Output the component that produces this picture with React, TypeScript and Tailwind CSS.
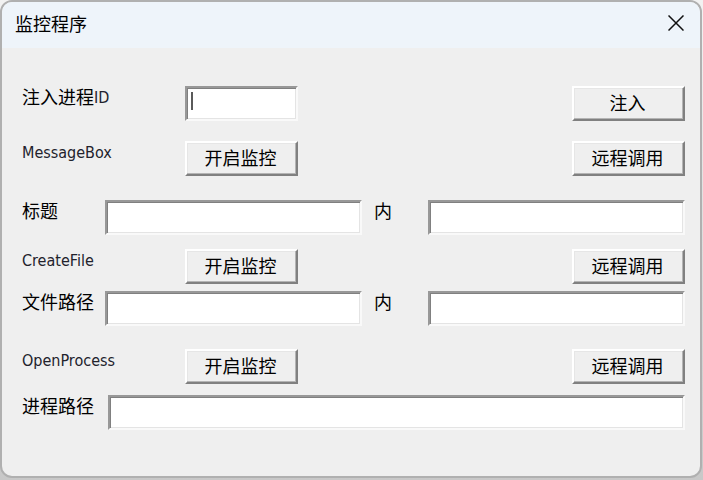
import type { ReactNode } from "react";

function ClassicButton({ children }: { children: ReactNode }) {
  return (
    <button
      type="button"
      className="h-[35px] w-[113px] shrink-0 border-2 border-t-white border-r-[#808080] border-b-[#808080] border-l-white bg-[#efefef] pr-0.5 pb-[3px] text-lg leading-none text-black shadow-[inset_-1px_-1px_0_#b4b4b4,inset_1px_1px_0_#e6e6e6]"
    >
      {children}
    </button>
  );
}

function Field({ id, grow = true }: { id: string; grow?: boolean }) {
  return (
    <input
      id={id}
      type="text"
      className={
        "h-[35px] min-w-0 border-2 border-t-[#989898] border-r-[#f9f9f9] border-b-[#f9f9f9] border-l-[#989898] bg-white px-1 text-lg text-black shadow-[inset_1px_1px_0_#808080,inset_-1px_-1px_0_#e4e4e4] outline-none " +
        (grow ? "flex-1" : "w-full caret-transparent")
      }
    />
  );
}

const cjkLabel = "shrink-0 text-lg leading-5 text-black";
const latin = "font-['DejaVu_Sans_Condensed','DejaVu_Sans',sans-serif] text-base leading-6 text-[#22222c]";

function ActionRow({ name }: { name: string }) {
  return (
    <div className="flex items-start">
      <span className={"w-[163px] shrink-0 " + latin}>{name}</span>
      <ClassicButton>开启监控</ClassicButton>
      <div className="flex-1" />
      <ClassicButton>远程调用</ClassicButton>
    </div>
  );
}

function PairRow({ id, label }: { id: string; label: string }) {
  return (
    <div className="flex items-start">
      <label htmlFor={id} className={"w-[83px] " + cjkLabel}>
        {label}
      </label>
      <Field id={id} />
      <label htmlFor={id + "-content"} className={"w-[66px] pl-3 " + cjkLabel}>
        内
      </label>
      <Field id={id + "-content"} />
    </div>
  );
}

export default function App() {
  return (
    <div className="flex min-h-screen bg-linear-to-b from-[#f2f2f2] to-[#c8c8c8] pr-px pb-[2px] font-['Noto_Sans_CJK_SC',sans-serif]">
      <div className="flex flex-1 flex-col overflow-hidden rounded-xl border-2 border-[#b0b0b0] bg-[#efefef]">
        <header className="flex h-[46px] items-center justify-between bg-[#eef4fa] pr-[14px] pb-1 pl-[13px]">
          <h1 className="text-lg leading-5 text-black">监控程序</h1>
          <button type="button" aria-label="关闭" className="flex size-5 items-center justify-center">
            <svg viewBox="0 0 16 16" className="size-4" fill="none" stroke="#111" strokeWidth="1.5">
              <path d="M.5.5l15 15M15.5.5l-15 15" />
            </svg>
          </button>
        </header>
        <main className="flex flex-col pt-[38px] pr-[15px] pb-11 pl-5">
          <div className="flex items-start">
            <label htmlFor="pid" className={"flex w-[163px] " + cjkLabel}>
              注入进程<span className={latin}>ID</span>
            </label>
            <div className="relative flex w-[113px] shrink-0">
              <Field id="pid" grow={false} />
              <span className="absolute top-1.5 left-1.5 h-[18px] w-0.5 bg-[#5a5a5a]" />
            </div>
            <div className="flex-1" />
            <ClassicButton>注入</ClassicButton>
          </div>
          <div className="mt-5">
            <ActionRow name="MessageBox" />
          </div>
          <div className="mt-6">
            <PairRow id="title" label="标题" />
          </div>
          <div className="mt-[14px]">
            <ActionRow name="CreateFile" />
          </div>
          <div className="mt-[7px]">
            <PairRow id="file" label="文件路径" />
          </div>
          <div className="mt-[23px]">
            <ActionRow name="OpenProcess" />
          </div>
          <div className="mt-[11px] flex items-start">
            <label htmlFor="process" className={"w-[86px] " + cjkLabel}>
              进程路径
            </label>
            <Field id="process" />
          </div>
        </main>
      </div>
    </div>
  );
}
